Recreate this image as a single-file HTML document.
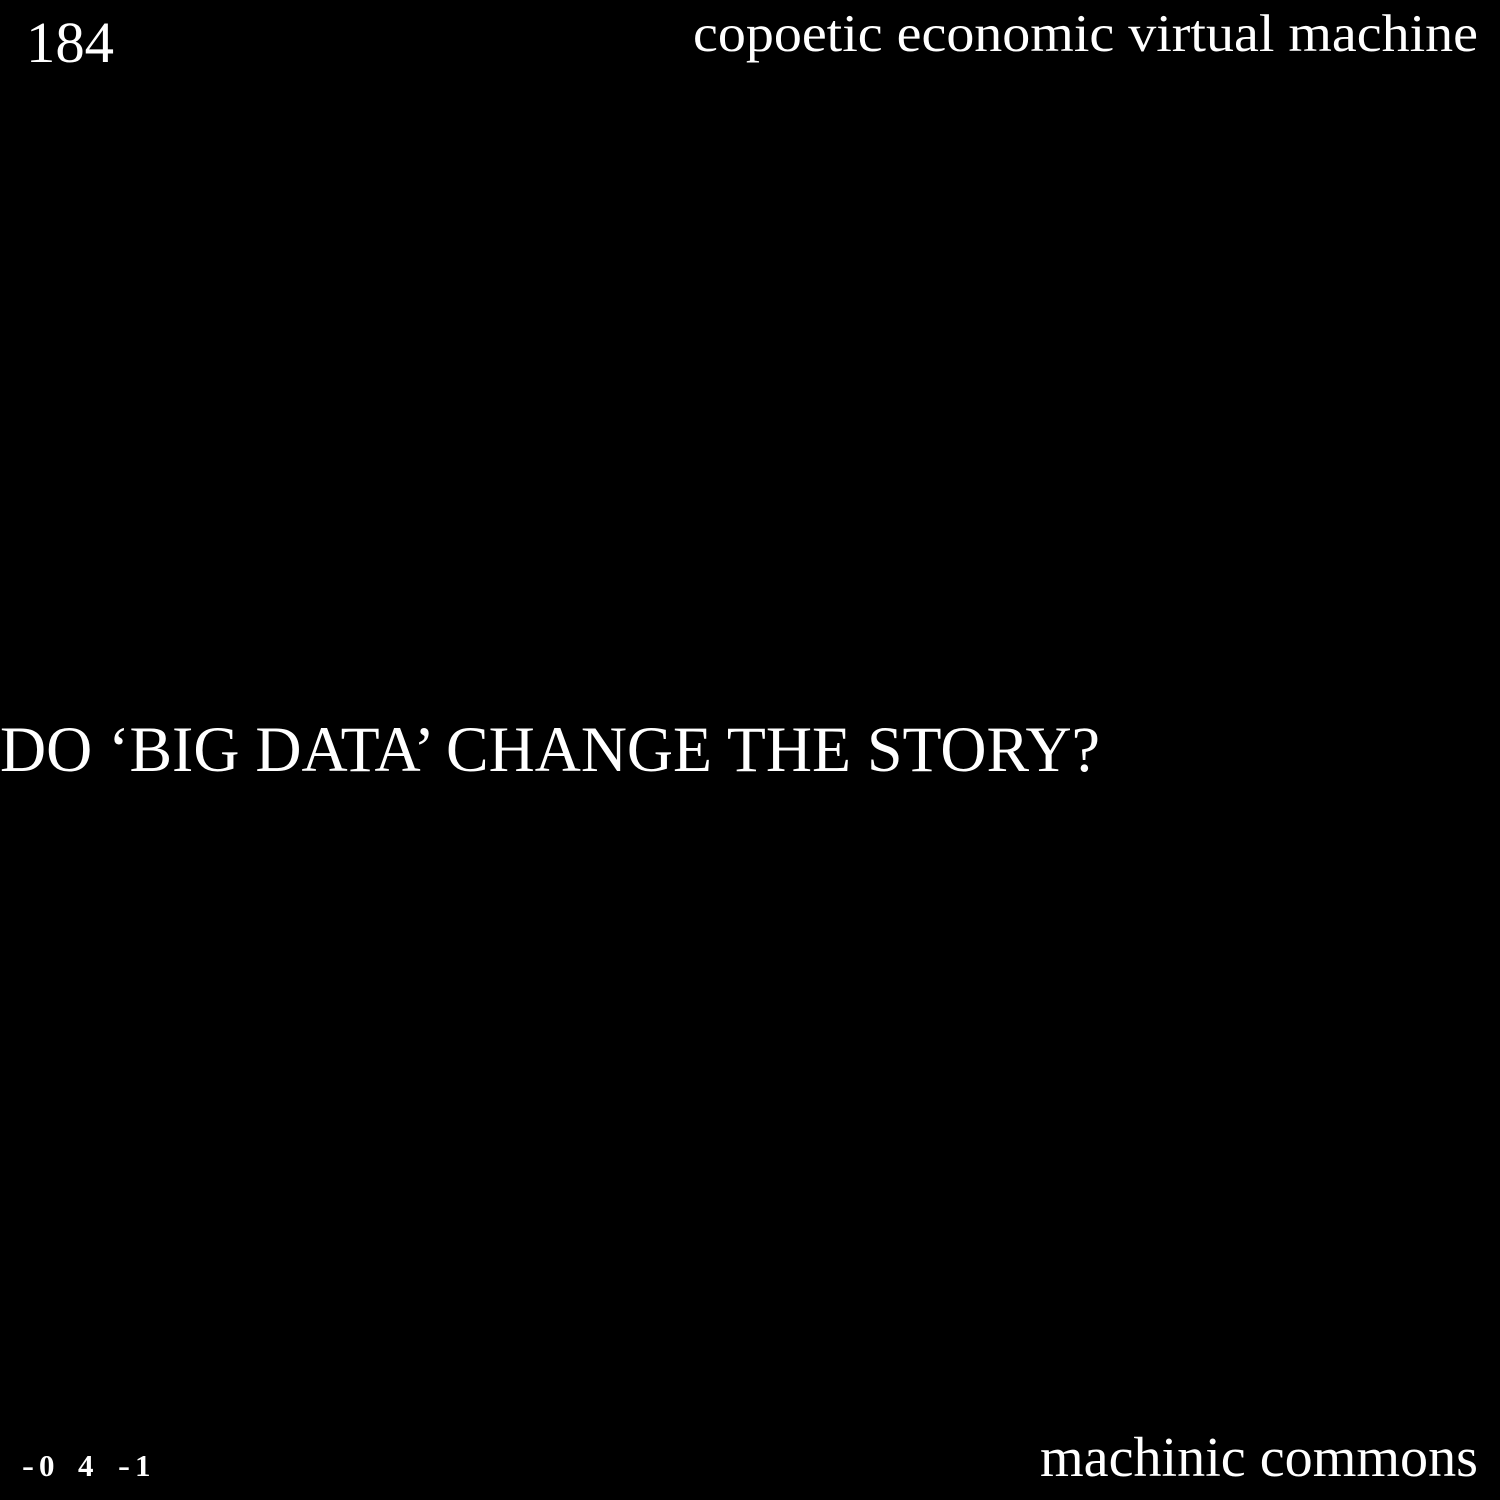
<!DOCTYPE html>
<html><head><meta charset="utf-8"><style>
html,body{margin:0;padding:0;background:#000;}
svg{display:block;}
text{font-family:"Liberation Serif",serif;fill:#fff;}
</style></head><body>
<svg width="1500" height="1500" viewBox="0 0 1500 1500">
<rect width="1500" height="1500" fill="#000"/>
<text x="26" y="62" font-size="58" textLength="88" lengthAdjust="spacingAndGlyphs">184</text>
<text x="693" y="51" font-size="53" textLength="785" lengthAdjust="spacingAndGlyphs">copoetic economic virtual machine</text>
<text x="0" y="771" font-size="65" textLength="1100" lengthAdjust="spacingAndGlyphs">DO ‘BIG DATA’ CHANGE THE STORY?</text>
<text x="1040" y="1476" font-size="56" textLength="438" lengthAdjust="spacingAndGlyphs">machinic commons</text>
<g font-size="31" font-weight="bold">
<text x="22" y="1476" textLength="12" lengthAdjust="spacingAndGlyphs">-</text>
<text x="39" y="1476">0</text>
<text x="78" y="1476">4</text>
<text x="118" y="1476" textLength="12" lengthAdjust="spacingAndGlyphs">-</text>
<text x="135" y="1476">1</text>
</g>
</svg>
</body></html>
